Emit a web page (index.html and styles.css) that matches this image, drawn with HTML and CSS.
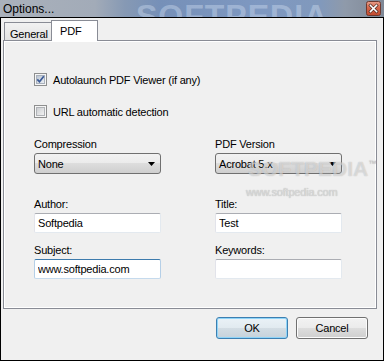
FILE: index.html
```html
<!DOCTYPE html>
<html lang="en">
<head>
    <meta charset="UTF-8">
    <title>Options...</title>
    <link rel="stylesheet" href="styles.css">
</head>
<body>
    <div class="window">
        <div class="titlebar">
            <span class="title">Options...</span>
            <span class="title-mark">SOFTPEDIA</span>
            <button class="close" aria-label="Close">
                <svg width="15" height="15" viewBox="0 0 15 15">
                    <defs>
                        <linearGradient id="closeBg" x1="0" y1="0" x2="0" y2="1">
                            <stop offset="0" stop-color="#e9a08c"/>
                            <stop offset="0.45" stop-color="#d3654a"/>
                            <stop offset="1" stop-color="#c24a2e"/>
                        </linearGradient>
                    </defs>
                    <rect x="0.5" y="0.5" width="14" height="14" rx="2" fill="url(#closeBg)" stroke="#6e3a30"/>
                    <path d="M4.5 4.5 L10.5 10.5 M10.5 4.5 L4.5 10.5" stroke="#4a2a24" stroke-width="3" stroke-linecap="square"/>
                    <path d="M4.5 4.5 L10.5 10.5 M10.5 4.5 L4.5 10.5" stroke="#fff" stroke-width="1.6" stroke-linecap="square"/>
                </svg>
            </button>
        </div>

        <div class="frame">
            <div class="tabs">
                <div class="tab">General</div>
                <div class="tab active">PDF</div>
            </div>

            <div class="panel">
                <label class="check">
                    <svg width="13" height="13" viewBox="0 0 13 13">
                        <defs>
                            <linearGradient id="boxOn" x1="0" y1="0" x2="1" y2="1">
                                <stop offset="0" stop-color="#b9c3d0"/>
                                <stop offset="1" stop-color="#eef1f5"/>
                            </linearGradient>
                        </defs>
                        <rect x="0.5" y="0.5" width="12" height="12" fill="#f6f6f6" stroke="#8e8f8f"/>
                        <rect x="2.5" y="2.5" width="8" height="8" fill="url(#boxOn)" stroke="#a9b1bc"/>
                        <path d="M3.3 6.4 L5.5 8.8 L9.8 3.2" fill="none" stroke="#3b5a96" stroke-width="1.7"/>
                    </svg>
                    <span>Autolaunch PDF Viewer (if any)</span>
                </label>
                <label class="check">
                    <svg width="13" height="13" viewBox="0 0 13 13">
                        <defs>
                            <linearGradient id="boxOff" x1="0" y1="0" x2="1" y2="1">
                                <stop offset="0" stop-color="#c9cccf"/>
                                <stop offset="1" stop-color="#f4f4f4"/>
                            </linearGradient>
                        </defs>
                        <rect x="0.5" y="0.5" width="12" height="12" fill="#f6f6f6" stroke="#8e8f8f"/>
                        <rect x="2.5" y="2.5" width="8" height="8" fill="url(#boxOff)" stroke="#b0b3b7"/>
                    </svg>
                    <span>URL automatic detection</span>
                </label>

                <div class="fields">
                    <div class="field">
                        <div class="label">Compression</div>
                        <div class="combo">
                            <span>None</span>
                            <svg width="7" height="4" viewBox="0 0 7 4"><polygon points="0,0 7,0 3.5,4" fill="#000"/></svg>
                        </div>
                    </div>
                    <div class="field">
                        <div class="label">PDF Version</div>
                        <div class="combo">
                            <span>Acrobat 5.x</span>
                            <svg width="7" height="4" viewBox="0 0 7 4"><polygon points="0,0 7,0 3.5,4" fill="#000"/></svg>
                        </div>
                    </div>

                    <div class="field row-b">
                        <div class="label">Author:</div>
                        <input class="text" type="text" value="Softpedia">
                    </div>
                    <div class="field row-b">
                        <div class="label">Title:</div>
                        <input class="text" type="text" value="Test">
                    </div>

                    <div class="field row-c">
                        <div class="label">Subject:</div>
                        <input class="text focused" type="text" value="www.softpedia.com">
                    </div>
                    <div class="field row-c">
                        <div class="label">Keywords:</div>
                        <input class="text" type="text" value="">
                    </div>
                </div>

                <span class="mark">SOFTPEDIA<sup>™</sup></span>
                <span class="mark-url">www.softpedia.com</span>
            </div>

            <div class="buttons">
                <button class="btn default">OK</button>
                <button class="btn">Cancel</button>
            </div>
        </div>
    </div>
</body>
</html>
```

FILE: styles.css
```css
* {
    box-sizing: border-box;
}
html, body {
    margin: 0;
    padding: 0;
}
body {
    font-family: "Liberation Sans", Arial, sans-serif;
    font-size: 11px;
    line-height: 14px;
    letter-spacing: -0.2px;
    color: #000;
    background: #f0f0f0;
}
.window {
    width: 384px;
    height: 361px;
    display: flex;
    flex-direction: column;
}

/* title bar */
.titlebar {
    position: relative;
    height: 17px;
    flex: none;
    display: flex;
    align-items: center;
    padding-left: 3px;
    overflow: hidden;
    background: linear-gradient(90deg, #aab1bb 0, #a2abb8 95px, #8699b4 125px, #7690b8 160px, #7e98c1 260px, #8199bc 320px, #8f9aaa 345px, #7f8896 384px);
}
.title {
    position: relative;
    z-index: 1;
    font-size: 12px;
    letter-spacing: 0;
}
.title-mark {
    position: absolute;
    left: 136px;
    top: 0;
    font-size: 32px;
    line-height: 32px;
    font-weight: bold;
    letter-spacing: 1px;
    color: rgba(215, 228, 246, 0.4);
}
.close {
    margin-left: auto;
    margin-right: 3px;
    width: 15px;
    height: 15px;
    padding: 0;
    border: none;
    background: none;
    display: block;
}
.close svg {
    display: block;
}

/* dialog body */
.frame {
    flex: 1;
    border: 1px solid #000;
    padding: 2px 6px 0 2px;
    display: flex;
    flex-direction: column;
}
.tabs {
    position: relative;
    z-index: 1;
    height: 21px;
    margin-bottom: -1px;
    display: flex;
    align-items: flex-start;
}
.tab {
    height: 18px;
    margin-top: 2px;
    margin-left: 1px;
    width: 49px;
    padding: 4px 0 0 5px;
    border: 1px solid #898c95;
    border-bottom: none;
    background: linear-gradient(#f2f2f2, #e3e3e3);
}
.tab.active {
    position: relative;
    height: 21px;
    margin-top: 0;
    margin-left: -2px;
    width: 47px;
    padding: 3px 0 0 8px;
    background: #fff;
}
.panel {
    position: relative;
    height: 269px;
    border: 1px solid #898c95;
    box-shadow: inset 0 0 0 1px #fff;
    padding: 32px 0 0 30px;
}
.check {
    display: flex;
    align-items: center;
    height: 13px;
    gap: 6px;
    margin-bottom: 19px;
}
.check svg {
    flex: none;
    display: block;
}
.fields {
    display: grid;
    grid-template-columns: 127px 127px;
    column-gap: 54px;
    margin-top: 19px;
    margin-top: 0;
}
.label {
    margin-bottom: 2px;
}
.field.row-b {
    margin-top: 23px;
}
.field.row-c {
    margin-top: 10px;
}
.combo {
    height: 21px;
    border: 1px solid #707070;
    border-radius: 3px;
    padding: 0 5px 0 3px;
    display: flex;
    align-items: center;
    justify-content: space-between;
    background: linear-gradient(#f2f2f2 0, #ebebeb 50%, #dddddd 50%, #cfcfcf 100%);
}
.combo svg {
    display: block;
}
.text {
    display: block;
    width: 127px;
    height: 20px;
    margin: 0;
    padding: 0 0 0 3px;
    font: inherit;
    letter-spacing: -0.2px;
    color: #000;
    background: #fff;
    border: 1px solid #e3e9ef;
    border-top-color: #abadb3;
    border-left-color: #e2e3ea;
    border-radius: 2px;
    outline: none;
}
.text.focused {
    border-color: #c5daed;
    border-top-color: #3d7bad;
    border-left-color: #b5cfe7;
    border-right-color: #b5cfe7;
}

/* watermark */
.mark {
    position: absolute;
    left: 244px;
    top: 112px;
    font-size: 21px;
    line-height: 22px;
    font-weight: bold;
    letter-spacing: 0;
    color: rgba(255, 255, 255, 0.45);
    text-shadow: 0 0 1px rgba(110, 110, 110, 0.45);
}
.mark sup {
    font-size: 8px;
    font-weight: normal;
    vertical-align: 10px;
    color: #c8c8c8;
}
.mark-url {
    position: absolute;
    left: 242px;
    top: 144px;
    font-size: 11px;
    color: #dadada;
    text-shadow: 0 0 1px #a8a8a8;
}

/* buttons */
.buttons {
    display: flex;
    justify-content: flex-end;
    gap: 8px;
    margin-top: 8px;
    padding-right: 9px;
}
.btn {
    width: 72px;
    height: 22px;
    padding: 0;
    font: inherit;
    letter-spacing: -0.2px;
    color: #000;
    border: 1px solid #707070;
    border-radius: 3px;
    background: linear-gradient(#f2f2f2 0, #ebebeb 50%, #dddddd 50%, #cfcfcf 100%);
    box-shadow: inset 0 0 0 1px #fcfcfc;
}
.btn.default {
    border-color: #3c7fb1;
    box-shadow: inset 0 0 0 1px #8fd4f8;
    background: linear-gradient(#eaf2f7 0, #e1eaf0 50%, #d3dde4 50%, #c6d2db 100%);
}
```
